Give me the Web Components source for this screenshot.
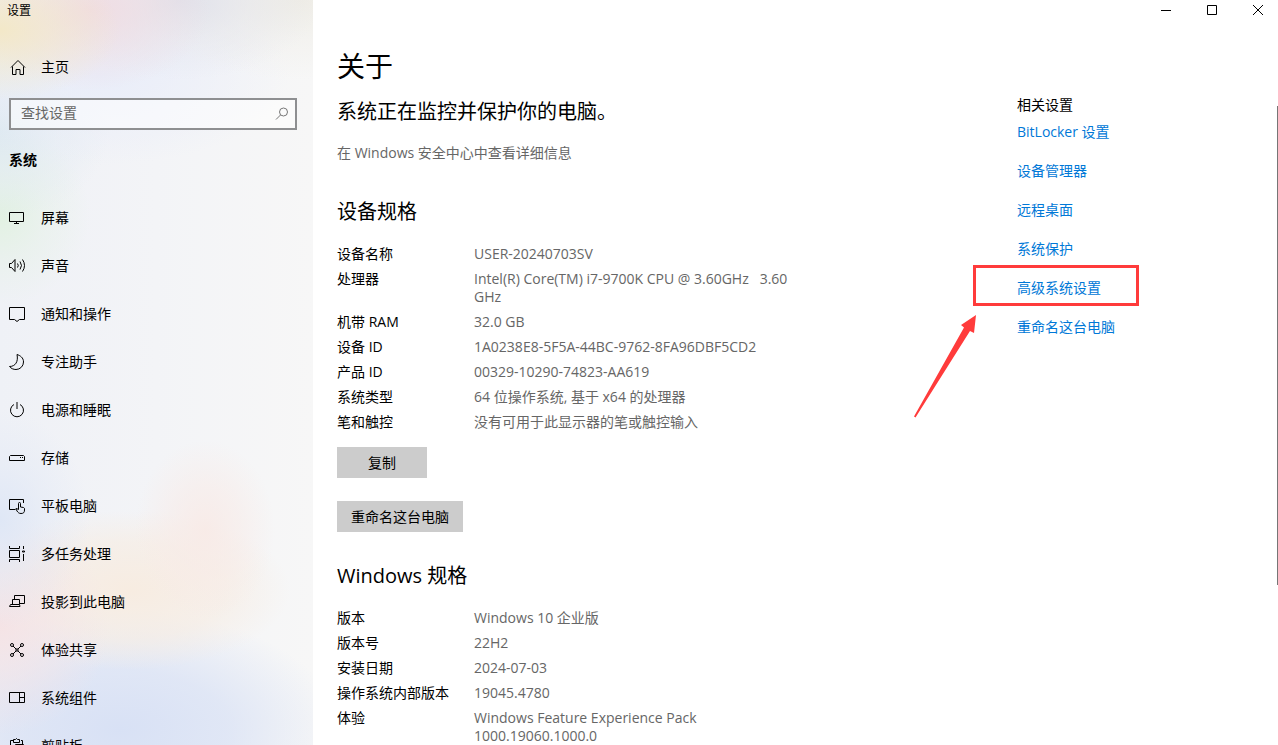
<!DOCTYPE html>
<html lang="zh-CN">
<head>
    <meta charset="UTF-8">
    <meta name="viewport" content="width=device-width, initial-scale=1.0">
    <title>设置</title>
    <style>
        body {
            margin: 0;
            font-family: "Open Sans", "Noto Sans CJK SC", sans-serif;
            font-size: 14px;
            line-height: 20px;
            color: #000;
            background: #fff;
        }
    </style>
</head>
<body>
<settings-app></settings-app>

<script>
    const ICONS = {
        home: '<path d="M2 8.500 9 1.500l7 7M3.500 7.500v8h3.500v-5h4v5h3.500v-8"/>',
        display: '<path d="M.5 2.500h14v9H.5zM7.500 11.500v2M5 13.500h5"/>',
        sound: '<path d="M.5 5.500h2l3.500-4v12l-3.500-4h-2z"/><path d="M8.500 5.500q1.500 2 0 4M11 3.500q3 4 0 8M13.500 1.500q4 6 0 12"/>',
        message: '<path d="M.5 1.500h15v12h-5l-2.500 2-2.500-2h-5z"/>',
        moon: '<path d="M8 .5c3 1 6.500 3 6.500 7.500a7.500 7.500 0 0 1-7.500 7.500c-2.500 0-5-1-6.500-3 6 0 9-5 7.500-12z"/>',
        power: '<path d="M5 2.500a6.500 6.500 0 1 0 6 0M8 0v7"/>',
        storage: '<path d="M1.500 5.500h13l1 1v4h-15v-4z"/><path d="M11 7.500h1M13 7.500h1"/>',
        tablet: '<path d="M6.500 11.500h-6v-10h14V5"/><path d="M9.500 11.500V5.500q0-1 1-1t1 1V9l3 .5q1.500.5 1 2.500c0 2.500-1 3.500-3.500 3.500-2 0-3-1-4-2.500l-1-2 .5-1 2 2"/>',
        multitask: '<path d="M.5 0v2.500h10V0M.5 4.500h10v7H.5zM.5 16v-2.500h10V16M14.500 0v3M14.500 8v7"/><path d="M13.500 5h2v1h-2z"/>',
        project: '<path d="M5.500 6V1.500h10v8H11"/><path d="M3.500 10.500v-5h7v5M1.500 10.500h9l.5 2H.5z"/>',
        share: '<circle cx="3" cy="3" r="1.500"/><circle cx="13" cy="3" r="1.500"/><circle cx="3" cy="13" r="1.500"/><circle cx="13" cy="13" r="1.500"/><path d="M4 4l3 3M12 4L9 7M4 12l3-3M12 12L9 9M7 7h2v2H7z"/>',
        components: '<path d="M.5 2.500h15v10H.5zM10.500 2.500v10M10.500 7.500h5"/>',
        clipboard: '<path d="M4 2.500H1.500v13H6M12 2.500h1.500V6M4.500 4.500v-3h2l1-1 1 1h2v3zM6.500 6.500h8v9h-8z"/>'
    };

    class SIcon extends HTMLElement {
        constructor() {
            super();
            this.shadow = this.attachShadow({mode: 'open'});
        }

        connectedCallback() {
            this.shadow.innerHTML = `
                <style>
                    :host {
                        display: block;
                        flex: none;
                        width: 17px;
                        height: 17px;
                    }

                    svg {
                        display: block;
                        fill: none;
                        stroke: currentColor;
                    }
                </style>
                <svg width="17" height="17" viewBox="0 0 17 17" aria-hidden="true">${ICONS[this.getAttribute('name')]}</svg>
            `;
        }
    }

    class SNavItem extends HTMLElement {
        constructor() {
            super();
            this.shadow = this.attachShadow({mode: 'open'});
        }

        connectedCallback() {
            this.shadow.innerHTML = `
                <style>
                    :host {
                        display: block;
                    }

                    .item {
                        display: flex;
                        align-items: center;
                        gap: 15px;
                        height: 48px;
                        padding: 0 9px;
                        color: inherit;
                        text-decoration: none;
                    }

                    .item:hover {
                        background: rgba(0, 0, 0, .06);
                    }

                    .label {
                        line-height: 22px;
                    }
                </style>
                <a class="item" href="#${this.getAttribute('icon')}">
                    <s-icon name="${this.getAttribute('icon')}"></s-icon>
                    <span class="label"><slot></slot></span>
                </a>
            `;
        }
    }

    class SSearch extends HTMLElement {
        constructor() {
            super();
            this.shadow = this.attachShadow({mode: 'open'});
        }

        connectedCallback() {
            this.shadow.innerHTML = `
                <style>
                    :host {
                        display: block;
                    }

                    .search {
                        display: flex;
                        align-items: center;
                        box-sizing: border-box;
                        height: 32px;
                        padding: 0 6px 0 10px;
                        border: 2px solid #8e8f91;
                        background: rgba(255, 255, 255, .5);
                    }

                    input {
                        flex: 1;
                        min-width: 0;
                        padding: 0 0 2px;
                        border: 0;
                        outline: 0;
                        background: none;
                        font: inherit;
                    }

                    input::placeholder {
                        color: #666;
                        opacity: 1;
                    }

                    svg {
                        fill: none;
                        stroke: #777;
                    }
                </style>
                <label class="search">
                    <input type="text" placeholder="查找设置" aria-label="查找设置">
                    <svg width="14" height="14" viewBox="0 0 14 14"><circle cx="8.500" cy="5" r="4"/><path d="M5.500 8 1 12.500"/></svg>
                </label>
            `;
        }
    }

    class SSidebar extends HTMLElement {
        constructor() {
            super();
            this.shadow = this.attachShadow({mode: 'open'});
        }

        connectedCallback() {
            this.shadow.innerHTML = `
                <style>
                    :host {
                        display: block;
                        overflow: hidden;
                        background:
                            radial-gradient(ellipse 120px 70px at 0 30px, #f3e8c8, rgba(243, 232, 200, .5) 50%, transparent),
                            radial-gradient(ellipse 120px 80px at 90px 10px, #f0dce2, rgba(240, 220, 226, .5) 50%, transparent),
                            radial-gradient(ellipse 140px 80px at 180px 0, #e0e1ea, rgba(224, 225, 234, .4) 50%, transparent),
                            radial-gradient(ellipse 160px 80px at 300px 0, #efede6, rgba(239, 237, 230, .4) 50%, transparent),
                            radial-gradient(ellipse 190px 90px at 100px 75px, #e9edf9, rgba(233, 237, 249, .5) 50%, transparent),
                            radial-gradient(ellipse 110px 90px at 0 130px, #dde9f0, rgba(221, 233, 240, .4) 50%, transparent),
                            radial-gradient(ellipse 90px 90px at 0 215px, #e2f1e2, rgba(226, 241, 226, .4) 50%, transparent),
                            radial-gradient(ellipse 90px 110px at 0 520px, #dfe7f6, rgba(223, 231, 246, .4) 50%, transparent),
                            radial-gradient(ellipse 110px 110px at 0 625px, #f5e3e5, rgba(245, 227, 229, .5) 50%, transparent),
                            radial-gradient(ellipse 70px 90px at 205px 530px, rgba(248, 234, 230, .9), rgba(248, 234, 230, .5) 50%, transparent),
                            radial-gradient(ellipse 160px 80px at 130px 590px, #f7ece1, rgba(247, 236, 225, .6) 60%, transparent),
                            radial-gradient(ellipse 220px 120px at 120px 730px, #d8e1f5, rgba(216, 225, 245, .7) 50%, transparent),
                            linear-gradient(90deg, #eff1f6, #f3f4f7 50%, #f7f7f7);
                    }

                    .title {
                        height: 20px;
                        padding-left: 7px;
                        font-size: 12px;
                        line-height: 22px;
                    }

                    .home {
                        margin-top: 23px;
                    }

                    .search {
                        margin: 7px 16px 0 9px;
                    }

                    h2 {
                        margin: 20px 9px 24px;
                        font-size: 14px;
                        line-height: 20px;
                    }
                </style>
                <div class="title">设置</div>
                <s-nav-item class="home" icon="home">主页</s-nav-item>
                <s-search class="search"></s-search>
                <h2>系统</h2>
                <nav>
                    <s-nav-item icon="display">屏幕</s-nav-item>
                    <s-nav-item icon="sound">声音</s-nav-item>
                    <s-nav-item icon="message">通知和操作</s-nav-item>
                    <s-nav-item icon="moon">专注助手</s-nav-item>
                    <s-nav-item icon="power">电源和睡眠</s-nav-item>
                    <s-nav-item icon="storage">存储</s-nav-item>
                    <s-nav-item icon="tablet">平板电脑</s-nav-item>
                    <s-nav-item icon="multitask">多任务处理</s-nav-item>
                    <s-nav-item icon="project">投影到此电脑</s-nav-item>
                    <s-nav-item icon="share">体验共享</s-nav-item>
                    <s-nav-item icon="components">系统组件</s-nav-item>
                    <s-nav-item icon="clipboard">剪贴板</s-nav-item>
                </nav>
            `;
        }
    }

    class SCaption extends HTMLElement {
        constructor() {
            super();
            this.shadow = this.attachShadow({mode: 'open'});
        }

        connectedCallback() {
            this.shadow.innerHTML = `
                <style>
                    :host {
                        display: flex;
                        justify-content: flex-end;
                        gap: 6px;
                    }

                    button {
                        display: flex;
                        align-items: center;
                        justify-content: center;
                        width: 40px;
                        height: 20px;
                        padding: 0;
                        border: 0;
                        background: none;
                    }

                    svg {
                        fill: none;
                        stroke: #000;
                    }
                </style>
                <button aria-label="最小化"><svg width="10" height="10"><path d="M0 5.500h10"/></svg></button>
                <button aria-label="最大化"><svg width="10" height="10"><path d="M.5.5h9v9h-9z"/></svg></button>
                <button aria-label="关闭"><svg width="10" height="10"><path d="M0 0l10 10M10 0L0 10"/></svg></button>
            `;
        }
    }

    class SButton extends HTMLElement {
        constructor() {
            super();
            this.shadow = this.attachShadow({mode: 'open'});
        }

        connectedCallback() {
            this.shadow.innerHTML = `
                <style>
                    :host {
                        display: block;
                    }

                    button {
                        display: block;
                        min-width: 90px;
                        height: 31px;
                        padding: 0 14px;
                        border: 0;
                        background: #ccc;
                        color: #000;
                        font: inherit;
                    }
                </style>
                <button type="button"><slot></slot></button>
            `;
        }
    }

    const SPECS = {
        device: [
            ['设备名称', 'USER-20240703SV'],
            ['处理器', 'Intel(R) Core(TM) i7-9700K CPU @ 3.60GHz   3.60 GHz'],
            ['机带 RAM', '32.0 GB'],
            ['设备 ID', '1A0238E8-5F5A-44BC-9762-8FA96DBF5CD2'],
            ['产品 ID', '00329-10290-74823-AA619'],
            ['系统类型', '64 位操作系统, 基于 x64 的处理器'],
            ['笔和触控', '没有可用于此显示器的笔或触控输入']
        ],
        windows: [
            ['版本', 'Windows 10 企业版'],
            ['版本号', '22H2'],
            ['安装日期', '2024-07-03'],
            ['操作系统内部版本', '19045.4780'],
            ['体验', 'Windows Feature Experience Pack 1000.19060.1000.0']
        ]
    };

    class SSpecs extends HTMLElement {
        constructor() {
            super();
            this.shadow = this.attachShadow({mode: 'open'});
        }

        connectedCallback() {
            const rows = SPECS[this.getAttribute('source')];

            this.shadow.innerHTML = `
                <style>
                    :host {
                        display: block;
                        max-width: 470px;
                    }

                    table {
                        width: 100%;
                        border-collapse: collapse;
                        table-layout: fixed;
                        line-height: 18px;
                    }

                    th, td {
                        padding: 0 0 7px;
                        text-align: left;
                        vertical-align: top;
                    }

                    th {
                        width: 137px;
                        font-weight: 400;
                    }

                    td {
                        color: #666;
                        white-space: pre-wrap;
                    }
                </style>
                <table>
                    ${rows.map(([name, value]) => `<tr><th scope="row">${name}</th><td>${value}</td></tr>`).join('')}
                </table>
            `;
        }
    }

    class SAbout extends HTMLElement {
        constructor() {
            super();
            this.shadow = this.attachShadow({mode: 'open'});
        }

        connectedCallback() {
            this.shadow.innerHTML = `
                <style>
                    :host {
                        display: block;
                    }

                    h1, h2, p {
                        margin: 0;
                        font-weight: 400;
                    }

                    h1 {
                        font-size: 28px;
                        line-height: 36px;
                    }

                    h2 {
                        font-size: 20px;
                        line-height: 28px;
                    }

                    .status {
                        margin: 14px 0 17px;
                    }

                    p {
                        color: #666;
                    }

                    .heading {
                        margin: 35px 0 19px;
                    }

                    .copy {
                        margin: 9px 0 23px;
                    }

                    .heading_windows {
                        margin: 30px 0 19px;
                    }
                </style>
                <h1>关于</h1>
                <h2 class="status">系统正在监控并保护你的电脑。</h2>
                <p>在 Windows 安全中心中查看详细信息</p>
                <h2 class="heading">设备规格</h2>
                <s-specs source="device"></s-specs>
                <s-button class="copy">复制</s-button>
                <s-button>重命名这台电脑</s-button>
                <h2 class="heading_windows">Windows 规格</h2>
                <s-specs source="windows"></s-specs>
            `;
        }
    }

    class SLink extends HTMLElement {
        constructor() {
            super();
            this.shadow = this.attachShadow({mode: 'open'});
        }

        connectedCallback() {
            this.shadow.innerHTML = `
                <style>
                    :host {
                        display: block;
                        position: relative;
                    }

                    a {
                        color: #0078d7;
                        text-decoration: none;
                    }

                    .frame {
                        position: absolute;
                        left: -44px;
                        top: -13px;
                        box-sizing: border-box;
                        width: 166px;
                        height: 41px;
                        border: 3px solid #ff3b3b;
                        pointer-events: none;
                    }

                    .arrow {
                        position: absolute;
                        left: -104px;
                        top: 37px;
                        fill: #ff3b3b;
                        pointer-events: none;
                    }
                </style>
                <a href="#"><slot></slot></a>
                ${this.hasAttribute('marked') ? `
                    <div class="frame"></div>
                    <svg class="arrow" width="64" height="104" viewBox="0 0 64 104"><path d="M63 0 48 10l3 2.500L1 101.500l1.500 1L57 16l4 2z"/></svg>
                ` : ''}
            `;
        }
    }

    class SRelated extends HTMLElement {
        constructor() {
            super();
            this.shadow = this.attachShadow({mode: 'open'});
        }

        connectedCallback() {
            this.shadow.innerHTML = `
                <style>
                    :host {
                        display: block;
                    }

                    h3 {
                        margin: 0 0 7px;
                        font-size: 14px;
                        font-weight: 400;
                    }

                    .links {
                        display: grid;
                        gap: 19px;
                    }
                </style>
                <h3>相关设置</h3>
                <div class="links">
                    <s-link>BitLocker 设置</s-link>
                    <s-link>设备管理器</s-link>
                    <s-link>远程桌面</s-link>
                    <s-link>系统保护</s-link>
                    <s-link marked>高级系统设置</s-link>
                    <s-link>重命名这台电脑</s-link>
                </div>
            `;
        }
    }

    class SettingsApp extends HTMLElement {
        constructor() {
            super();
            this.shadow = this.attachShadow({mode: 'open'});
        }

        connectedCallback() {
            this.shadow.innerHTML = `
                <style>
                    :host {
                        display: grid;
                        grid-template-columns: 313px minmax(0, 1fr);
                        height: 100vh;
                        overflow: hidden;
                    }

                    .page {
                        display: flex;
                        flex-direction: column;
                        min-height: 0;
                    }

                    .content {
                        flex: 1;
                        display: grid;
                        grid-template-columns: minmax(0, 1fr) 260px 1px;
                        min-height: 0;
                        padding: 28px 0 0 24px;
                        overflow: hidden;
                    }

                    .related {
                        margin-top: 47px;
                    }

                    .scroll {
                        height: 68%;
                        margin-top: 58px;
                        background: #767676;
                    }
                </style>
                <s-sidebar></s-sidebar>
                <div class="page">
                    <s-caption></s-caption>
                    <main class="content">
                        <s-about></s-about>
                        <s-related class="related"></s-related>
                        <div class="scroll"></div>
                    </main>
                </div>
            `;
        }
    }

    customElements.define('s-icon', SIcon);
    customElements.define('s-nav-item', SNavItem);
    customElements.define('s-search', SSearch);
    customElements.define('s-sidebar', SSidebar);
    customElements.define('s-caption', SCaption);
    customElements.define('s-button', SButton);
    customElements.define('s-specs', SSpecs);
    customElements.define('s-about', SAbout);
    customElements.define('s-link', SLink);
    customElements.define('s-related', SRelated);
    customElements.define('settings-app', SettingsApp);
</script>
</body>
</html>
